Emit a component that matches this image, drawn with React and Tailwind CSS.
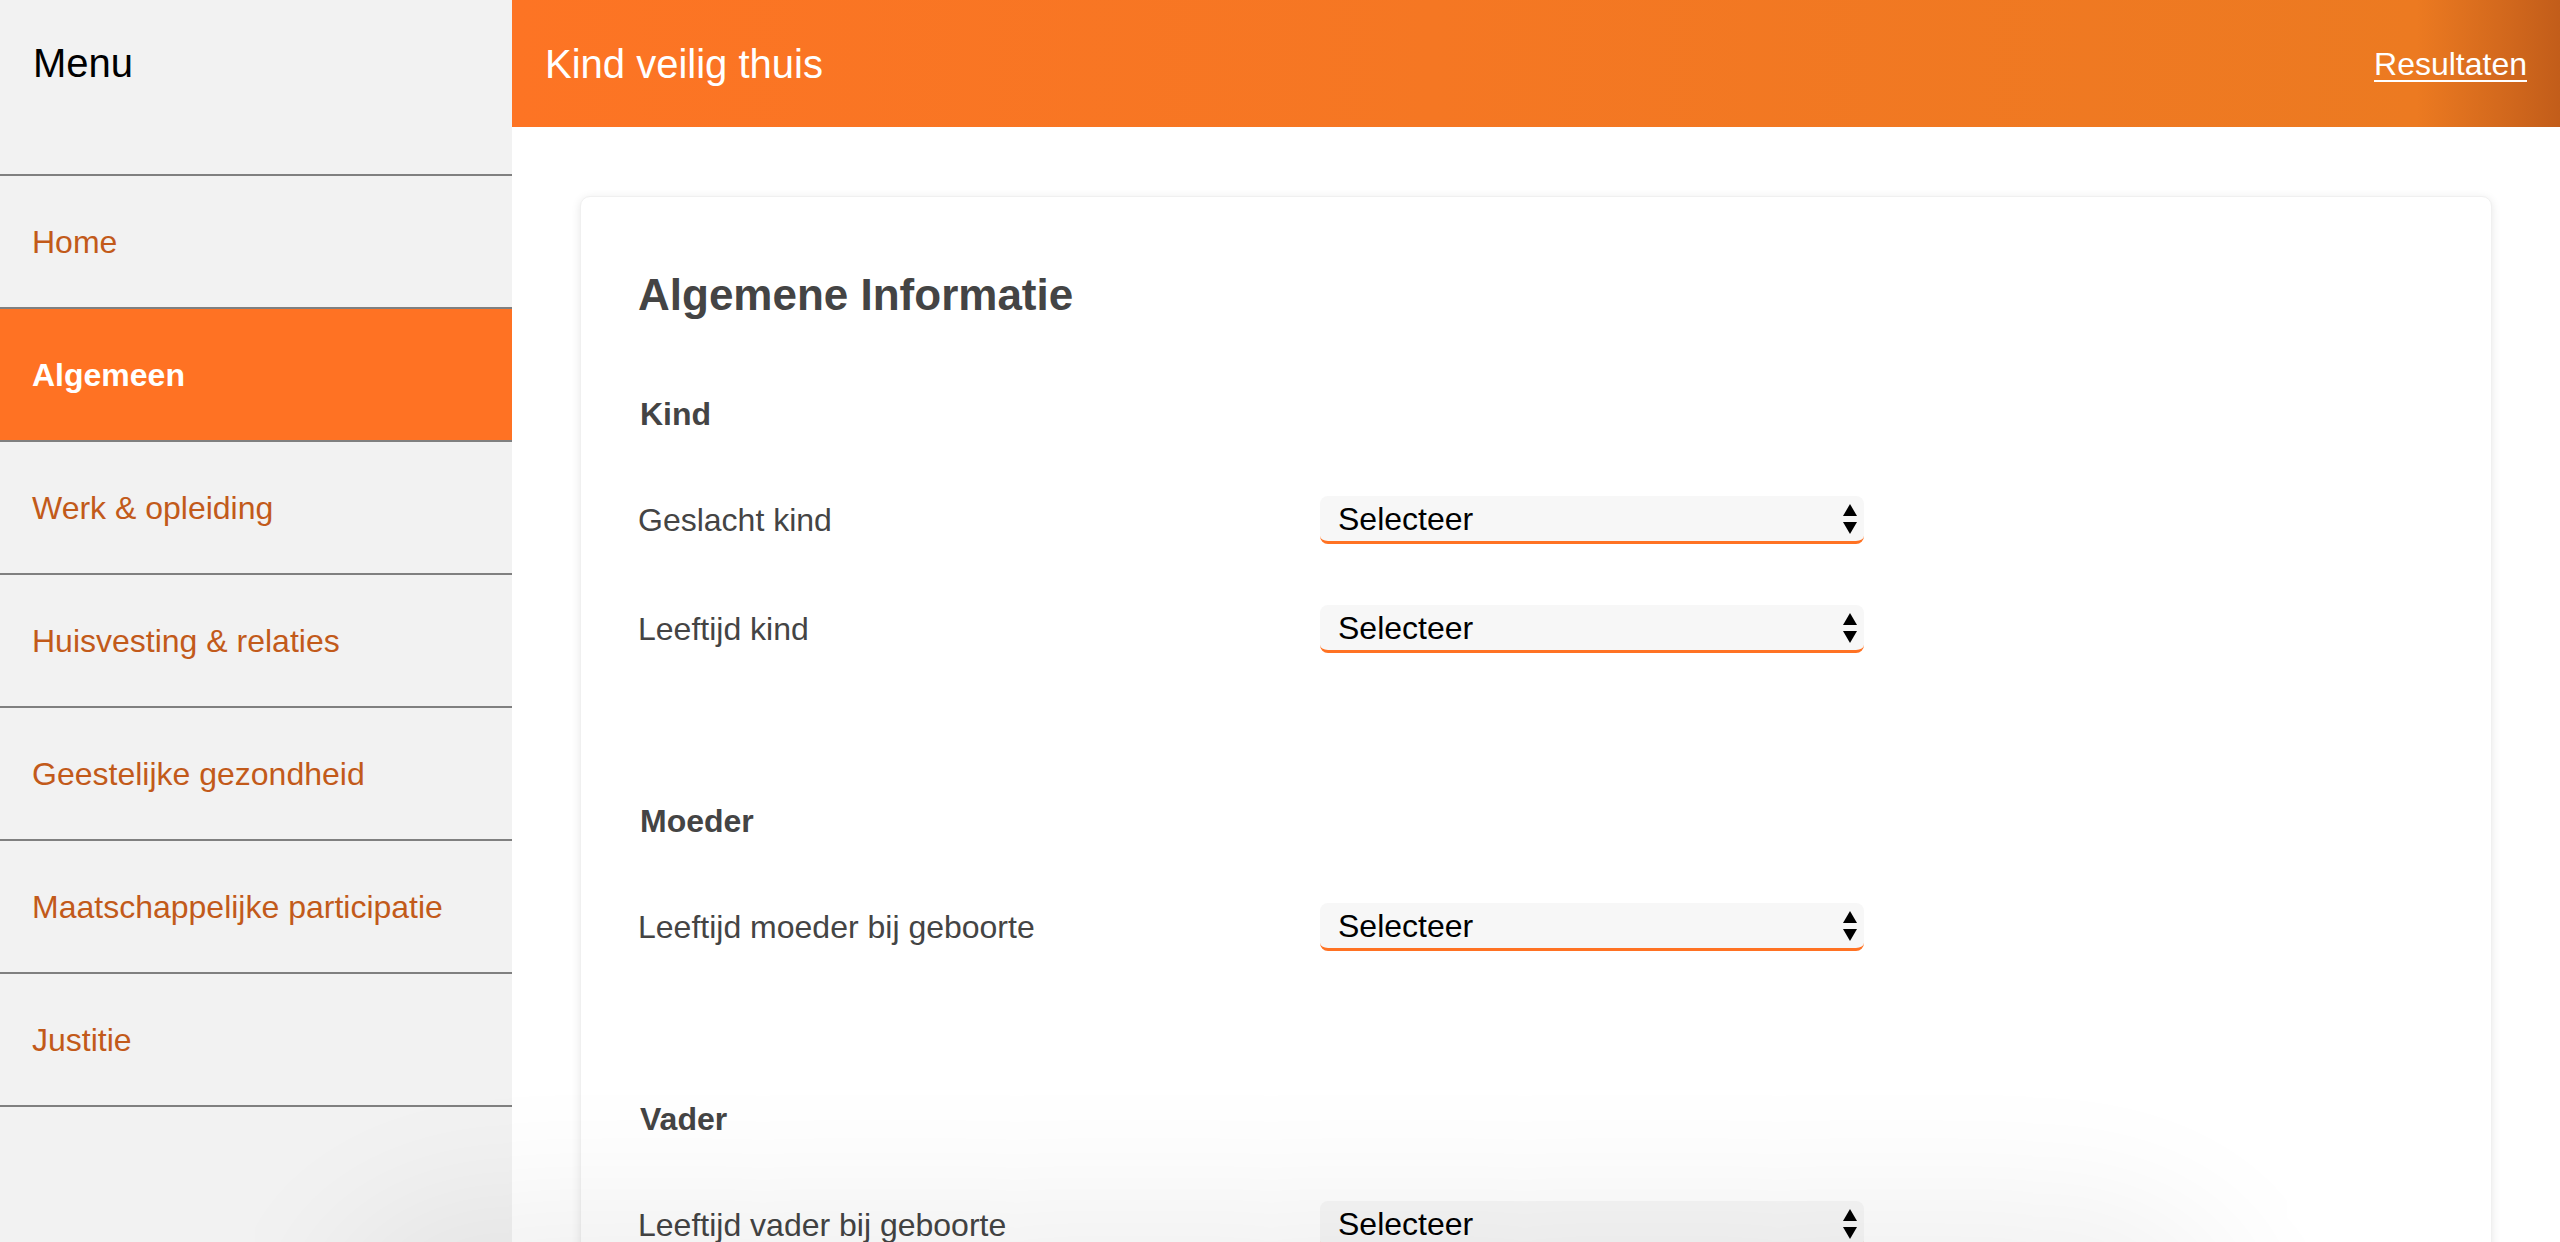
import React from 'react';

const navItems = [
  'Home',
  'Algemeen',
  'Werk & opleiding',
  'Huisvesting & relaties',
  'Geestelijke gezondheid',
  'Maatschappelijke participatie',
  'Justitie',
];

const sections = [
  { title: 'Kind', fields: ['Geslacht kind', 'Leeftijd kind'] },
  { title: 'Moeder', fields: ['Leeftijd moeder bij geboorte'] },
  { title: 'Vader', fields: ['Leeftijd vader bij geboorte'] },
];

function SelectBox() {
  return (
    <div className="relative w-[544px] h-[48px]">
      <select
        defaultValue=""
        className="appearance-none w-full h-full bg-[#f7f7f7] rounded-[8px] border-b-[3px] border-[#ff7223] pl-[18px] text-[32px] leading-[44px] text-black outline-none"
      >
        <option value="">Selecteer</option>
      </select>
      <svg className="absolute right-[7px] top-[8px] pointer-events-none" width="14" height="30" viewBox="0 0 14 30">
        <polygon points="0,12 7,0 14,12" fill="#000" />
        <polygon points="0,18 14,18 7,30" fill="#000" />
      </svg>
    </div>
  );
}

export default function App() {
  const active = 'Algemeen';

  return (
    <div className="relative flex h-[1242px] overflow-hidden bg-white font-['Liberation_Sans',Arial,sans-serif]">
      {/* Sidebar */}
      <aside className="w-[512px] shrink-0 bg-[#f2f2f2] flex flex-col">
        <div className="h-[176px] border-b-2 border-[#808080]">
          <div className="h-[125px] flex items-center px-[33px] text-[40px] text-black">Menu</div>
        </div>
        {navItems.map((item) => (
          <div
            key={item}
            className={`h-[133px] flex items-center px-[32px] text-[32px] border-b-2 border-[#808080] ${
              item === active ? 'bg-[#ff7223] text-white font-bold' : 'text-[#c25a1a]'
            }`}
          >
            {item}
          </div>
        ))}
      </aside>

      {/* Main */}
      <div className="flex-1 flex flex-col min-w-0">
        <header className="h-[127px] shrink-0 flex items-center justify-between px-[33px] bg-[linear-gradient(90deg,#fd7424_0%,#f57723_45%,#ec7a21_93%,#c25d1a_100%)]">
          <h1 className="text-[40px] text-white">Kind veilig thuis</h1>
          <a href="#" className="text-[32px] text-white underline underline-offset-[5px] decoration-2">Resultaten</a>
        </header>

        <div className="px-[68px] pt-[69px]">
          <div className="bg-white rounded-[10px] border border-[#f0f0f0] shadow-[0_2px_10px_rgba(0,0,0,0.10)] pl-[57px] pt-[72px] pb-[120px] text-[#444]">
            <h2 className="text-[44px] leading-[52px] font-bold">Algemene Informatie</h2>

            {sections.map((section, i) => (
              <div key={section.title} className={i === 0 ? 'mt-[73px]' : 'mt-[148px]'}>
                <h3 className="text-[32px] leading-[40px] font-bold pl-[2px]">{section.title}</h3>
                <div className="mt-[62px] flex flex-col gap-[61px]">
                  {section.fields.map((field) => (
                    <div key={field} className="flex items-center">
                      <label className="w-[682px] text-[32px] leading-[40px]">{field}</label>
                      <SelectBox />
                    </div>
                  ))}
                </div>
              </div>
            ))}
          </div>
        </div>
      </div>

      {/* shadow cast from below the fold */}
      <div className="absolute left-[380px] top-[1300px] w-[1800px] h-[200px] rounded-full pointer-events-none shadow-[0_-20px_150px_70px_rgba(0,0,0,0.07)]"></div>
    </div>
  );
}
